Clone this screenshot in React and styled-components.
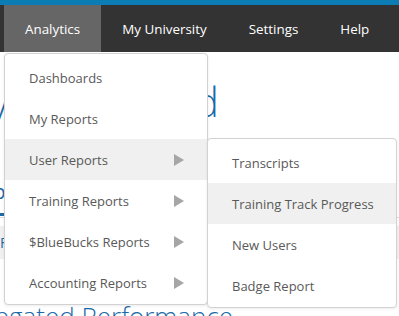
import React from "react";
import styled, { createGlobalStyle } from "styled-components";

const Global = createGlobalStyle`
  html, body { margin: 0; padding: 0; background: #fff; }
  body { font-family: "Open Sans", "Noto Sans", Arial, sans-serif; overflow: hidden; }
  * { box-sizing: border-box; }
`;

const Page = styled.div`
  position: relative;
  width: 399px;
  height: 316px;
  overflow: hidden;
`;

const TopStripe = styled.div`
  height: 5px;
  background: #0b7cb4;
`;

const NavBar = styled.nav`
  height: 47px;
  background: #333333;
  display: flex;
  padding-left: 4px;
  position: relative;
`;

const NavItem = styled.div`
  position: relative;
  display: flex;
  align-items: center;
  padding: 0 21px;
  color: #ffffff;
  font-size: 13.4px;
  white-space: nowrap;
  background: ${(p) => (p.$active ? "#666666" : "transparent")};
`;

const Content = styled.main`
  margin-left: -58px;
  padding-top: 26px;
  white-space: nowrap;
`;

const Heading = styled.h1`
  margin: 0;
  padding-left: 14px;
  font-family: "Open Sans", sans-serif;
  font-weight: 300;
  font-size: 40px;
  line-height: 48px;
  color: #1c6aa8;
`;

const Tabs = styled.div`
  margin-top: 52px;
  display: flex;
  border-bottom: 1px solid #dcdcdc;
  height: 40px;
  align-items: flex-start;
`;

const Tab = styled.div`
  font-size: 20px;
  color: #1c6aa8;
  padding: 0 8px 8px;
  border-bottom: 3px solid ${(p) => (p.$active ? "#1c6aa8" : "transparent")};
  margin-right: 16px;
`;

const FilterBand = styled.div`
  margin-top: 8px;
  height: 33px;
  background: #f0f0f0;
  display: flex;
  align-items: center;
  padding-left: 58px;
  color: #1c6aa8;
  font-size: 14px;
`;

const SubHeading = styled.h2`
  margin: 42px 0 0;
  font-weight: 300;
  font-size: 26px;
  color: #1c6aa8;
  line-height: 30px;
`;

const Menu = styled.ul`
  position: absolute;
  top: ${(p) => p.$top}px;
  left: ${(p) => p.$left}px;
  width: ${(p) => p.$width}px;
  margin: 0;
  padding: 3px 0 1px;
  list-style: none;
  background: #ffffff;
  border: 1px solid #d2d2d2;
  border-radius: 4px;
  box-shadow: 0 1px 3px rgba(0, 0, 0, 0.08);
  z-index: 10;
`;

const MenuItem = styled.li`
  height: 41px;
  display: flex;
  align-items: center;
  justify-content: space-between;
  padding: 0 23px 0 24px;
  font-size: 13px;
  white-space: nowrap;
  color: #595959;
  background: ${(p) => (p.$hover ? "#f0f0f0" : "transparent")};
`;

const Arrow = () => (
  <svg width="10" height="12" viewBox="0 0 10 12" aria-hidden="true">
    <polygon points="0,0 10,6 0,12" fill="#a6a6a6" />
  </svg>
);

const mainItems = [
  { label: "Dashboards" },
  { label: "My Reports" },
  { label: "User Reports", sub: true, hover: true },
  { label: "Training Reports", sub: true },
  { label: "$BlueBucks Reports", sub: true },
  { label: "Accounting Reports", sub: true },
];

const subItems = [
  { label: "Transcripts" },
  { label: "Training Track Progress", hover: true },
  { label: "New Users" },
  { label: "Badge Report" },
];

export default function App() {
  return (
    <Page>
      <Global />
      <TopStripe />
      <NavBar>
        <NavItem $active>Analytics</NavItem>
        <NavItem>My University</NavItem>
        <NavItem>Settings</NavItem>
        <NavItem>Help</NavItem>
      </NavBar>
      <Content>
        <Heading>My Dashboard</Heading>
        <Tabs>
          <Tab $active>Completions</Tab>
          <Tab>Progress</Tab>
        </Tabs>
        <FilterBand>Filter</FilterBand>
        <SubHeading>Aggregated Performance</SubHeading>
      </Content>
      <Menu $top={53} $left={4} $width={204}>
        {mainItems.map((it) => (
          <MenuItem key={it.label} $hover={it.hover}>
            <span>{it.label}</span>
            {it.sub && <Arrow />}
          </MenuItem>
        ))}
      </Menu>
      <Menu $top={138} $left={207} $width={190}>
        {subItems.map((it) => (
          <MenuItem key={it.label} $hover={it.hover}>
            <span>{it.label}</span>
          </MenuItem>
        ))}
      </Menu>
    </Page>
  );
}
